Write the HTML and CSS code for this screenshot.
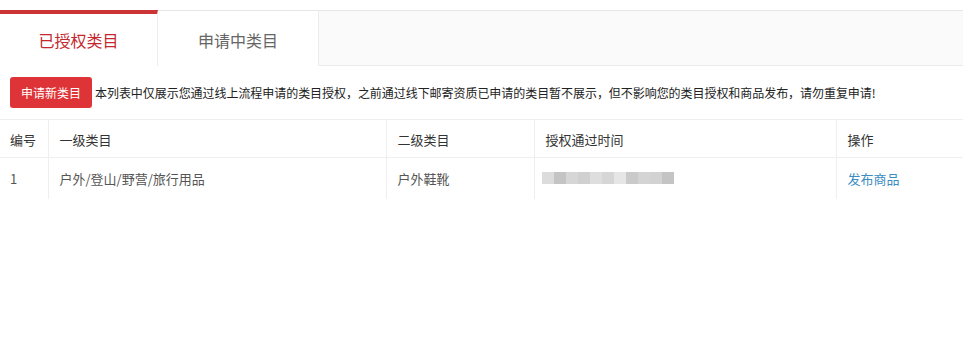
FILE: index.html
```html
<!DOCTYPE html>
<html lang="zh-CN">
<head>
<meta charset="utf-8">
<title>已授权类目</title>
<link rel="stylesheet" href="styles.css">
</head>
<body>
<div class="page">
  <div class="tabs">
    <div class="tab active">已授权类目</div>
    <div class="tab">申请中类目</div>
  </div>
  <div class="notice">
    <button class="btn">申请新类目</button>
    <span class="notice-text">本列表中仅展示您通过线上流程申请的类目授权，之前通过线下邮寄资质已申请的类目暂不展示，但不影响您的类目授权和商品发布，请勿重复申请!</span>
  </div>
  <table class="grid">
    <thead>
      <tr>
        <th class="c-no">编号</th>
        <th class="c-l1">一级类目</th>
        <th class="c-l2">二级类目</th>
        <th class="c-time">授权通过时间</th>
        <th class="c-op">操作</th>
      </tr>
    </thead>
    <tbody>
      <tr>
        <td>1</td>
        <td>户外/登山/野营/旅行用品</td>
        <td>户外鞋靴</td>
        <td>
          <div class="blur">
            <span class="px s1"></span><span class="px s2"></span><span class="px s3"></span><span class="px s4"></span><span class="px s5"></span><span class="px s3"></span><span class="px s6"></span><span class="px s7"></span><span class="px s8"></span><span class="px s9"></span><span class="px s2"></span>
          </div>
        </td>
        <td><a class="link" href="#">发布商品</a></td>
      </tr>
    </tbody>
  </table>
</div>
</body>
</html>
```
FILE: styles.css
```css
* { box-sizing: border-box; }
html, body { margin: 0; padding: 0; background: #fff; }
body {
  font-family: "Noto Sans CJK SC", "Liberation Sans", sans-serif;
  color: #333;
}
.page { width: 963px; padding-top: 10px; }

.tabs {
  display: flex;
  height: 56px;
  background: #fafafa;
  border-top: 1px solid #e6e6e6;
  border-bottom: 1px solid #ebebeb;
}
.tab {
  width: 161px;
  margin-top: -1px;
  height: 56px;
  display: flex;
  align-items: center;
  justify-content: center;
  font-size: 16px;
  color: #666;
  background: #fff;
  border-top: 1px solid #e6e6e6;
  border-right: 1px solid #ececec;
  padding-top: 2px;
}
.tab.active {
  width: 158px;
  color: #c3282e;
  border-top: 4px solid #cc3535;
  border-right: 1px solid #ececec;
  padding-top: 0;
}

.notice {
  display: flex;
  align-items: center;
  gap: 3px;
  padding: 10px 10px 10px 10px;
  height: 53px;
}
.btn {
  width: 82px;
  height: 31px;
  border: none;
  border-radius: 3px;
  background: #df3437;
  color: #fff;
  font-family: inherit;
  font-size: 12px;
  padding: 0;
  line-height: 31px;
}
.notice-text {
  font-size: 12px;
  color: #222;
  letter-spacing: -0.05px;
  white-space: nowrap;
}

.grid {
  width: 963px;
  border-collapse: collapse;
  font-size: 13px;
}
.grid th, .grid td {
  text-align: left;
  font-weight: normal;
  padding: 0 0 0 11px;
  border-left: 1px solid #efefef;
}
.grid th:first-child, .grid td:first-child { border-left: none; padding-left: 10px; }
.grid th {
  height: 38px;
  color: #333;
  border-top: 1px solid #efefef;
  border-bottom: 1px solid #efefef;
  padding-top: 1px;
}
.grid td {
  height: 41px;
  color: #555;
}
.c-no { width: 48px; }
.c-l1 { width: 338px; }
.c-l2 { width: 148px; }
.c-time { width: 302px; }
.c-op { width: 127px; }

.blur { display: flex; height: 12px; margin-left: -4px; }
.px { width: 12px; height: 12px; display: block; }
.s1 { background: #dcdcdc; }
.s2 { background: #c4c4c4; }
.s3 { background: #d6d6d6; }
.s4 { background: #d0d0d0; }
.s5 { background: #dedede; }
.s6 { background: #e6e6e6; }
.s7 { background: #cacaca; }
.s8 { background: #d4d4d4; }
.s9 { background: #d2d2d2; }

.link { color: #3b8dc2; text-decoration: none; }
```
